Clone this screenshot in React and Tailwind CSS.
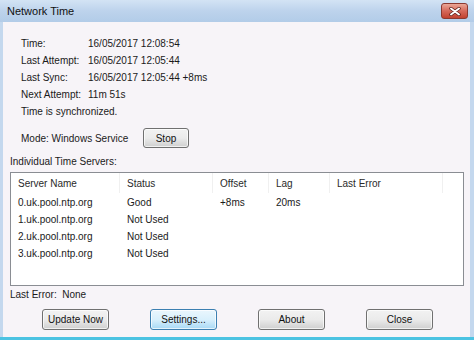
import React from 'react';

const info = [
    ['Time:', '16/05/2017 12:08:54'],
    ['Last Attempt:', '16/05/2017 12:05:44'],
    ['Last Sync:', '16/05/2017 12:05:44 +8ms'],
    ['Next Attempt:', '11m 51s'],
];

const columns = [
    { title: 'Server Name', width: 'w-[109px]' },
    { title: 'Status', width: 'w-[93px]' },
    { title: 'Offset', width: 'w-[56px]' },
    { title: 'Lag', width: 'w-[61px]' },
    { title: 'Last Error', width: 'w-[113px]' },
];

const servers = [
    ['0.uk.pool.ntp.org', 'Good', '+8ms', '20ms', ''],
    ['1.uk.pool.ntp.org', 'Not Used', '', '', ''],
    ['2.uk.pool.ntp.org', 'Not Used', '', '', ''],
    ['3.uk.pool.ntp.org', 'Not Used', '', '', ''],
];

function Button({ children, focused, className = '' }) {
    const look = focused
        ? 'border-[#3c7fb1] bg-gradient-to-b from-[#eaf6fd] via-[#d9f0fc] to-[#a7d9f5]'
        : 'border-[#707070] bg-gradient-to-b from-[#f2f2f2] via-[#ebebeb] to-[#cfcfcf]';
    return (
        <button
            className={`flex items-center justify-center rounded-[3px] border text-[10px] text-[#111] shadow-[inset_0_0_0_1px_rgba(255,255,255,0.7)] ${look} ${className}`}
        >
            {children}
        </button>
    );
}

export default function App() {
    return (
        <div
            className="flex h-[340px] w-[474px] flex-col bg-[#c4d8ee] border-b-[3px] border-[#4cc3e2] text-[10px] text-[#1a1a1a]"
            style={{ fontFamily: '"Liberation Sans", Arial, sans-serif' }}
        >
            {/* title bar */}
            <div className="flex h-[22px] shrink-0 items-center justify-between bg-gradient-to-b from-[#d3e3f4] via-[#bdd3ec] to-[#b2cce8] pl-[7px] pr-[6px]">
                <span className="text-[11px] text-[#111]">Network Time</span>
                <div className="flex h-[16px] w-[27px] items-center justify-center rounded-[3px] border border-[#8c3a31] bg-gradient-to-b from-[#eaa797] via-[#d5685a] to-[#c2412f]">
                    <svg width="12" height="9" viewBox="0 0 12 9">
                        <path d="M2 1.5 L10 7.5 M10 1.5 L2 7.5" stroke="#5a1d16" strokeWidth="3.4" strokeLinecap="round" />
                        <path d="M2 1.5 L10 7.5 M10 1.5 L2 7.5" stroke="#ffffff" strokeWidth="2" strokeLinecap="round" />
                    </svg>
                </div>
            </div>

            {/* client */}
            <div className="ml-[3px] mr-[4px] flex flex-1 flex-col bg-[#f7f4f8] px-[7px]">
                <div className="pl-[11px] pt-[13px]">
                    {info.map(([label, value]) => (
                        <div key={label} className="flex h-[17px] items-center">
                            <span className="w-[67px]">{label}</span>
                            <span>{value}</span>
                        </div>
                    ))}
                    <div className="flex h-[17px] items-center">Time is synchronized.</div>
                    <div className="mt-[8px] flex h-[20px] items-center">
                        <span className="w-[122px]">Mode: Windows Service</span>
                        <Button className="h-[20px] w-[46px]">Stop</Button>
                    </div>
                </div>

                <div className="mt-[5px] flex h-[16px] items-center">Individual Time Servers:</div>

                <div className="mt-[3px] h-[114px] w-[454px] border border-[#8a8d93] bg-white">
                    <div className="flex h-[20px] items-center text-[#2a2a2a]">
                        {columns.map((c) => (
                            <div key={c.title} className={`${c.width} flex h-full items-center border-r border-[#f0f0f0] pl-[7px]`}>
                                {c.title}
                            </div>
                        ))}
                    </div>
                    <div className="pt-[1px]">
                        {servers.map((row) => (
                            <div key={row[0]} className="flex h-[17px] items-center">
                                {row.map((cell, i) => (
                                    <div key={i} className={`${columns[i].width} pl-[7px]`}>
                                        {cell}
                                    </div>
                                ))}
                            </div>
                        ))}
                    </div>
                </div>

                <div className="flex h-[16px] items-center">Last Error:&nbsp; None</div>

                <div className="mt-[7px] flex gap-[41px] pl-[32px]">
                    <Button className="h-[21px] w-[67px]">Update Now</Button>
                    <Button focused className="h-[21px] w-[67px]">Settings...</Button>
                    <Button className="h-[21px] w-[67px]">About</Button>
                    <Button className="h-[21px] w-[67px]">Close</Button>
                </div>
            </div>
        </div>
    );
}
